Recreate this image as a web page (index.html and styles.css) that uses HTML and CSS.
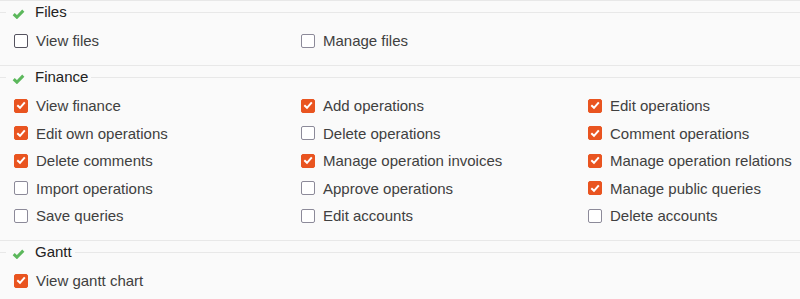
FILE: index.html
```html
<!DOCTYPE html>
<html lang="en">
<head>
    <meta charset="UTF-8">
    <meta name="viewport" content="width=device-width, initial-scale=1.0">
    <title>Permissions</title>
    <link rel="stylesheet" href="styles.css">
</head>
<body>
    <div class="section">
        <fieldset class="group">
            <legend><svg class="ok" viewBox="0 0 12 10"><path d="M1.2 5.2 L4.4 8.2 L10.8 1.6"/></svg>Files</legend>
            <div class="perms">
                <label class="perm"><span class="box focus"></span>View files</label>
                <label class="perm"><span class="box"></span>Manage files</label>
            </div>
        </fieldset>
    </div>

    <div class="section">
        <fieldset class="group">
            <legend><svg class="ok" viewBox="0 0 12 10"><path d="M1.2 5.2 L4.4 8.2 L10.8 1.6"/></svg>Finance</legend>
            <div class="perms">
                <label class="perm"><span class="box on"><svg viewBox="0 0 14 14"><path d="M3.3 7.2 L6 9.8 L10.8 4.4"/></svg></span>View finance</label>
                <label class="perm"><span class="box on"><svg viewBox="0 0 14 14"><path d="M3.3 7.2 L6 9.8 L10.8 4.4"/></svg></span>Add operations</label>
                <label class="perm"><span class="box on"><svg viewBox="0 0 14 14"><path d="M3.3 7.2 L6 9.8 L10.8 4.4"/></svg></span>Edit operations</label>
                <label class="perm"><span class="box on"><svg viewBox="0 0 14 14"><path d="M3.3 7.2 L6 9.8 L10.8 4.4"/></svg></span>Edit own operations</label>
                <label class="perm"><span class="box"></span>Delete operations</label>
                <label class="perm"><span class="box on"><svg viewBox="0 0 14 14"><path d="M3.3 7.2 L6 9.8 L10.8 4.4"/></svg></span>Comment operations</label>
                <label class="perm"><span class="box on"><svg viewBox="0 0 14 14"><path d="M3.3 7.2 L6 9.8 L10.8 4.4"/></svg></span>Delete comments</label>
                <label class="perm"><span class="box on"><svg viewBox="0 0 14 14"><path d="M3.3 7.2 L6 9.8 L10.8 4.4"/></svg></span>Manage operation invoices</label>
                <label class="perm"><span class="box on"><svg viewBox="0 0 14 14"><path d="M3.3 7.2 L6 9.8 L10.8 4.4"/></svg></span>Manage operation relations</label>
                <label class="perm"><span class="box"></span>Import operations</label>
                <label class="perm"><span class="box"></span>Approve operations</label>
                <label class="perm"><span class="box on"><svg viewBox="0 0 14 14"><path d="M3.3 7.2 L6 9.8 L10.8 4.4"/></svg></span>Manage public queries</label>
                <label class="perm"><span class="box"></span>Save queries</label>
                <label class="perm"><span class="box"></span>Edit accounts</label>
                <label class="perm"><span class="box"></span>Delete accounts</label>
            </div>
        </fieldset>
    </div>

    <div class="section">
        <fieldset class="group">
            <legend><svg class="ok" viewBox="0 0 12 10"><path d="M1.2 5.2 L4.4 8.2 L10.8 1.6"/></svg>Gantt</legend>
            <div class="perms">
                <label class="perm"><span class="box on"><svg viewBox="0 0 14 14"><path d="M3.3 7.2 L6 9.8 L10.8 4.4"/></svg></span>View gantt chart</label>
            </div>
        </fieldset>
    </div>
</body>
</html>
```

FILE: styles.css
```css
body {
    margin: 0;
    background-color: #fafafa;
    font-family: "Liberation Sans", Arial, sans-serif;
    font-size: 15px;
    color: #404040;
}
.section {
    border-top: 1px solid #e8e8e8;
    padding-top: 1px;
}
.group {
    margin: 0;
    padding: 5px 0 10.5px 0;
    border: 0;
    border-top: 1px solid #e8e8e8;
    min-inline-size: 0;
}
.group legend {
    margin-left: 6px;
    padding: 0 3px 0 6px;
    height: 20px;
    line-height: 20px;
    color: #222;
    display: flex;
    align-items: center;
}
.ok {
    width: 13px;
    height: 10px;
    margin: 4px 10px 0 0;
    fill: none;
    stroke: #5cb85c;
    stroke-width: 3;
}
.perms {
    display: grid;
    grid-template-columns: 287px 287px 1fr;
    grid-auto-rows: 27.5px;
    padding-left: 14px;
}
.perm {
    display: flex;
    align-items: center;
    gap: 8px;
}
.box {
    width: 14px;
    height: 14px;
    box-sizing: border-box;
    border: 1.5px solid #8c8a99;
    border-radius: 2px;
    background-color: #fff;
    flex: none;
}
.box.focus {
    border-color: #55535f;
}
.box.on {
    border-color: #e95420;
    background-color: #e95420;
    position: relative;
}
.box.on svg {
    position: absolute;
    left: -1.5px;
    top: -1.5px;
    width: 14px;
    height: 14px;
    fill: none;
    stroke: #fff;
    stroke-width: 2;
}
```
